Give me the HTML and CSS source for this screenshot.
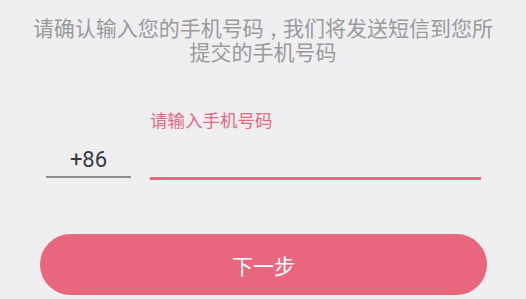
FILE: index.html
```html
<!DOCTYPE html>
<html lang="zh-CN">
<head>
<meta charset="utf-8">
<title>验证手机号</title>
<link rel="stylesheet" href="styles.css">
</head>
<body>
<div class="page">
  <p class="intro">请确认输入您的手机号码 , 我们将发送短信到您所提交的手机号码</p>
  <div class="phone-row">
    <div class="code">+86</div>
    <div class="field">
      <div class="label">请输入手机号码</div>
      <div class="input"></div>
    </div>
  </div>
  <button class="next" type="button">下一步</button>
</div>
</body>
</html>
```
FILE: styles.css
```css
html, body {
  margin: 0;
  padding: 0;
  background: #efeff2;
}
.page {
  width: 526px;
  height: 299px;
  overflow: hidden;
  font-family: "Noto Sans CJK SC", "Noto Sans", sans-serif;
}
.intro {
  margin: 0 auto;
  padding-top: 15px;
  width: 466px;
  text-align: center;
  font-size: 21px;
  line-height: 24px;
  word-spacing: 2px;
  color: #9a9a9c;
}
.phone-row {
  display: flex;
  align-items: flex-end;
  margin-top: 47px;
  padding: 0 45px 0 46px;
}
.code {
  width: 85px;
  margin-bottom: 2px;
  padding-bottom: 1px;
  border-bottom: 2px solid #8e8e90;
  text-align: center;
  font-family: Roboto, "Noto Sans", sans-serif;
  font-size: 22px;
  line-height: 30px;
  color: #373a42;
}
.field {
  flex: 1;
  margin-left: 19px;
  display: flex;
  flex-direction: column;
}
.label {
  font-size: 17.5px;
  line-height: 20px;
  color: #e8677f;
}
.input {
  height: 47px;
  border-bottom: 3px solid #e8677f;
}
.next {
  display: flex;
  align-items: center;
  justify-content: center;
  box-sizing: border-box;
  margin: 54px 39px 0 40px;
  width: 447px;
  height: 61px;
  border: none;
  border-radius: 31px;
  background: #e8677f;
  color: #ffffff;
  font-family: "Noto Sans CJK SC", "Noto Sans", sans-serif;
  font-size: 21px;
  padding: 0;
}
```
